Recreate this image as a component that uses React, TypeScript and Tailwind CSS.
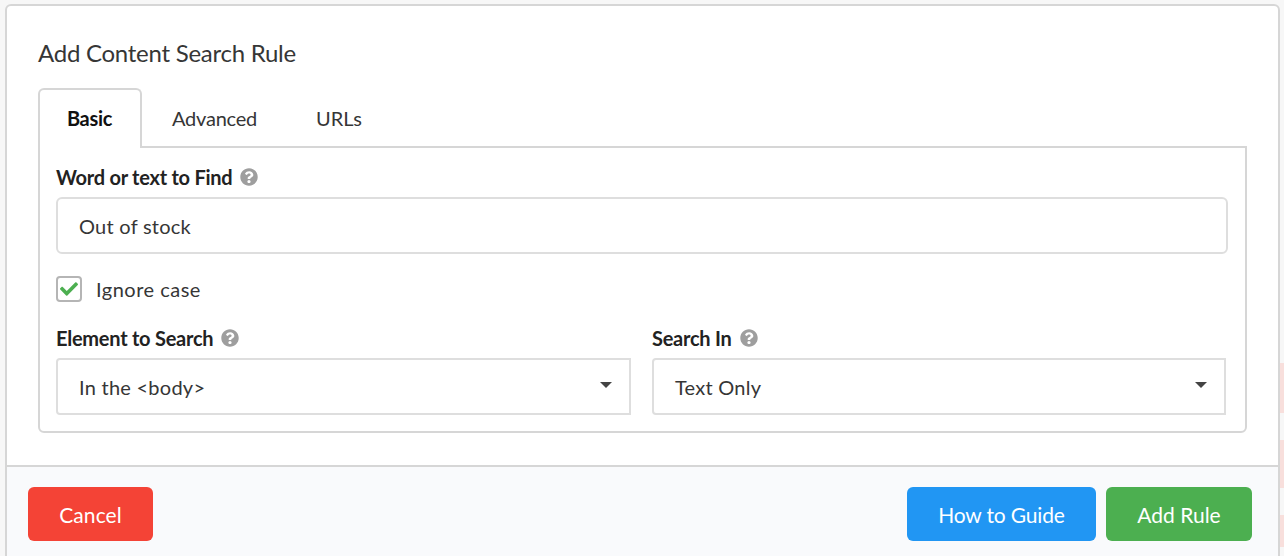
import React from "react";
import { FaCheck, FaQuestionCircle } from "react-icons/fa";

const Label = ({ children }: { children: React.ReactNode }) => (
	<div className="flex items-center h-[24px] text-[20px] font-bold tracking-[-0.25px] text-[#222]">
		{children}
		<FaQuestionCircle size={18} className="ml-2 text-[#9e9e9e]" />
	</div>
);

const Select = ({ value }: { value: string }) => (
	<div className="flex items-center justify-between h-[57px] border-2 border-[#dedede] rounded-l-[4px] pl-[21px] pr-[17px] text-[20px] tracking-[0.25px] text-[#363636]">
		<span>{value}</span>
		<span className="w-0 h-0 border-x-[6px] border-x-transparent border-t-[6px] border-t-[#444] mb-[3px]" />
	</div>
);

const App = () => {
	return (
		<div className="w-[1284px] h-[556px] overflow-hidden bg-[#f7f7f7] pt-[4px] flex font-['Lato',sans-serif]">
			<div className="w-[5px]" />
			<div className="w-[1275px] h-[560px] bg-white border-2 border-[#d6d6d6] rounded-[6px] overflow-hidden flex flex-col">
				<div className="h-[459px] pt-[32px] px-[31px]">
					<h1 className="text-[24px] leading-[30px] tracking-[-0.26px] text-[#363636]">Add Content Search Rule</h1>
					<div className="flex mt-[20px] h-[60px] text-[20px] text-[#363636]">
						<div className="w-[104px] relative z-10 bg-white border-2 border-b-0 border-[#d6d6d6] rounded-t-[6px] flex items-center justify-center pb-[3px] pr-[1px] font-bold tracking-[-0.3px] text-[#111]">
							Basic
						</div>
						<div className="flex items-center justify-center pb-[1px] w-[145px] tracking-[-0.2px]">Advanced</div>
						<div className="flex items-center justify-center pb-[1px] w-[60px] ml-[22px]">URLs</div>
					</div>
					<div className="mt-[-2px] h-[287px] border-2 border-[#d6d6d6] rounded-b-[6px] pt-[17px] pl-[16px] pr-[17px]">
						<Label>Word or text to Find</Label>
						<div className="mt-[8px] h-[57px] flex items-center border-2 border-[#dedede] rounded-[6px] pl-[21px] text-[20px] tracking-[0.25px] text-[#363636]">
							Out of stock
						</div>
						<div className="flex items-center mt-[22px] h-[26px] text-[20px] tracking-[0.5px] text-[#363636]">
							<div className="w-[26px] h-[26px] border-2 border-[#b5b5b5] rounded-[4px] flex items-center justify-center">
								<FaCheck size={18} className="text-[#4caf50]" />
							</div>
							<span className="ml-[14px]">Ignore case</span>
						</div>
						<div className="flex mt-[24px] gap-[21px]">
							<div className="w-[575px]">
								<Label>Element to Search</Label>
								<div className="mt-[8px]">
									<Select value="In the <body>" />
								</div>
							</div>
							<div className="w-[574px]">
								<Label>Search In</Label>
								<div className="mt-[8px]">
									<Select value="Text Only" />
								</div>
							</div>
						</div>
					</div>
				</div>
				<div className="flex-1 bg-[#f9fafc] border-t-2 border-[#d6d6d6] pt-[20px] pl-[21px] pr-[26px] flex justify-between items-start">
					<button className="w-[125px] h-[54px] pt-[2px] rounded-[6px] bg-[#f44336] text-white text-[21px] tracking-[0.1px]">
						Cancel
					</button>
					<div className="flex gap-[10px]">
						<button className="w-[189px] h-[54px] pt-[2px] rounded-[6px] bg-[#2196f3] text-white text-[21px] tracking-[-0.15px]">
							How to Guide
						</button>
						<button className="w-[146px] h-[54px] pt-[2px] rounded-[6px] bg-[#4caf50] text-white text-[21px]">
							Add Rule
						</button>
					</div>
				</div>
			</div>
			{/* faded page showing behind the modal */}
			<div className="w-[4px] flex flex-col pt-[359px]">
				<div className="h-[50px] bg-[#f8dfdc]" />
				<div className="h-[48px] mt-[27px] bg-[#f8dfdc]" />
				<div className="h-[32px] mt-[27px] bg-[#f8dfdc]" />
			</div>
		</div>
	);
};

export default App;
